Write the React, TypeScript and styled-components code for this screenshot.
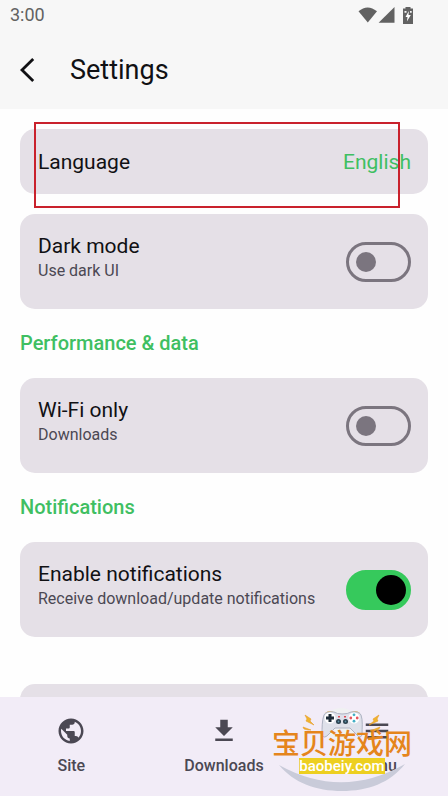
import React from "react";
import styled, { createGlobalStyle } from "styled-components";

const GlobalStyle = createGlobalStyle`
  *, *::before, *::after { box-sizing: border-box; }
  body {
    margin: 0;
    background: #fefefe;
    color: #111114;
    font-family: Roboto, "Noto Sans", sans-serif;
  }
  button, input { font: inherit; margin: 0; }
`;

const green = "#3fbf62";
const muted = "#4b4853";

const Screen = styled.div`
  display: flex;
  flex-direction: column;
  height: 100vh;
`;

const TopBar = styled.header`
  flex: none;
  background: #f7f7f7;
`;

const StatusBar = styled.div`
  display: flex;
  align-items: center;
  justify-content: space-between;
  height: 30px;
  padding: 0 35px 0 10px;
  color: #626262;
  font-size: 18px;
  line-height: 30px;
`;

const StatusIcons = styled.div`
  display: flex;
  align-items: center;
`;

const TitleRow = styled.div`
  display: flex;
  align-items: center;
  gap: 30px;
  height: 79px;
  padding: 0 12px;
`;

const BackButton = styled.button`
  display: flex;
  justify-content: center;
  width: 28px;
  padding: 0;
  border: 0;
  background: none;
  color: inherit;
  cursor: pointer;
`;

const Title = styled.h1`
  margin: 0;
  font-size: 27px;
  font-weight: 400;
  line-height: 36px;
`;

const Content = styled.main`
  flex: 1;
  min-height: 0;
  display: flex;
  flex-direction: column;
  gap: 20px;
  padding: 20px;
  overflow-y: auto;
  scrollbar-width: none;
`;

const Card = styled.div<{ $tall?: boolean; $spaced?: boolean }>`
  position: relative;
  flex: none;
  display: flex;
  align-items: center;
  justify-content: space-between;
  min-height: ${(p) => (p.$tall ? 95 : 65)}px;
  margin-top: ${(p) => (p.$spaced ? 27 : 0)}px;
  padding: 17px;
  padding-left: 18px;
  border-radius: 15px;
  background: #e5e0e7;
`;

const TextColumn = styled.label`
  display: flex;
  flex-direction: column;
  align-self: flex-start;
`;

const ItemTitle = styled.span`
  font-size: 21px;
  line-height: 30px;
`;

const ItemNote = styled.span`
  color: ${muted};
  font-size: 16px;
  line-height: 20px;
`;

const ValueButton = styled.button`
  padding: 0;
  border: 0;
  background: none;
  color: ${green};
  font-size: 21px;
  line-height: 30px;
  cursor: pointer;
`;

const Highlight = styled.div`
  position: absolute;
  inset: -7px 28px -14px 14px;
  border: 2px solid #c9212c;
  pointer-events: none;
`;

const SectionTitle = styled.h2`
  flex: none;
  margin: 0;
  color: ${green};
  font-size: 20px;
  font-weight: 500;
  line-height: 29px;
`;

const Switch = styled.input`
  appearance: none;
  flex: none;
  display: flex;
  align-items: center;
  width: 65px;
  height: 40px;
  padding: 0 7px;
  border: 3px solid #7b757f;
  border-radius: 20px;
  cursor: pointer;

  &::before {
    content: "";
    width: 20px;
    height: 20px;
    border-radius: 50%;
    background: #7b757f;
  }

  &:checked {
    justify-content: flex-end;
    padding: 0 2px;
    border-color: #36c95c;
    background: #36c95c;
  }

  &:checked::before {
    width: 30px;
    height: 30px;
    background: #000;
  }
`;

const BottomNav = styled.nav`
  position: relative;
  flex: none;
  display: grid;
  grid-template-columns: repeat(3, 1fr);
  gap: 10px;
  height: 99px;
  padding-top: 19px;
  background: #f2ecf7;
`;

const NavLink = styled.a`
  display: flex;
  flex-direction: column;
  align-items: center;
  gap: 10px;
  color: ${muted};
  font-size: 16px;
  font-weight: 500;
  line-height: 20px;
  text-decoration: none;
`;

const Watermark = styled.div`
  position: absolute;
  right: 36px;
  bottom: 4px;
  display: flex;
  flex-direction: column;
  align-items: center;
  width: 140px;
  height: 84px;
  padding-top: 19px;
  pointer-events: none;
`;

const WatermarkArt = styled.svg`
  position: absolute;
  inset: 0;
`;

const WatermarkName = styled.span`
  position: relative;
  color: #e5851c;
  font-family: "Noto Sans CJK SC", sans-serif;
  font-size: 28px;
  font-weight: 500;
  line-height: 31px;
  white-space: nowrap;
`;

const WatermarkSite = styled.span`
  position: relative;
  width: 86px;
  background: #edcf20;
  color: #fff;
  font-size: 15px;
  font-weight: 500;
  line-height: 16px;
  text-align: center;
`;

const WifiIcon = () => (
  <svg width="20" height="16" viewBox="0 0 20 16" fill="currentColor" aria-hidden="true">
    <path d="M0.5 4.2Q9.5-3.4 19 4.2L9.8 15.5Z" />
  </svg>
);

const SignalIcon = () => (
  <svg width="17" height="16" viewBox="0 0 17 16" fill="currentColor" aria-hidden="true">
    <path d="M16.5 0V15.8H0.6Z" />
  </svg>
);

const BatteryIcon = () => (
  <svg width="18" height="17" viewBox="0 0 18 17" aria-hidden="true">
    <path d="M10.5 0h5v1.5H18V17H8V1.5h2.5Z" fill="currentColor" />
    <path d="M13.8 4L10.5 10h2l-.6 4.5L15.8 8h-2.3Z" fill="#fff" />
    <path d="M9.5 4h2v1.8h-2ZM15 4h1.7v1.8H15Z" fill="#f7f7f7" />
  </svg>
);

const BackIcon = () => (
  <svg width="18" height="26" viewBox="0 0 18 26" fill="none" aria-hidden="true">
    <path d="M16.2 2L5 13L16.2 24" stroke="currentColor" strokeWidth="2.8" />
  </svg>
);

const GlobeIcon = () => (
  <svg width="30" height="30" viewBox="0 0 24 24" fill="currentColor" aria-hidden="true">
    <path d="M12 2C6.48 2 2 6.48 2 12s4.48 10 10 10 10-4.48 10-10S17.52 2 12 2zm-1 17.93c-3.95-.49-7-3.85-7-7.93 0-.62.08-1.21.21-1.79L9 15v1c0 1.1.9 2 2 2v1.93zm6.9-2.54c-.26-.81-1-1.39-1.9-1.39h-1v-3c0-.55-.45-1-1-1H8v-2h2c.55 0 1-.45 1-1V7h2c1.1 0 2-.9 2-2v-.41c2.93 1.19 5 4.06 5 7.41 0 2.08-.8 3.97-2.1 5.39z" />
  </svg>
);

const DownloadIcon = () => (
  <svg width="30" height="30" viewBox="0 0 24 24" fill="currentColor" aria-hidden="true">
    <path d="M19 9h-4V3H9v6H5l7 7 7-7zM5 18v2h14v-2H5z" />
  </svg>
);

const MenuIcon = () => (
  <svg width="30" height="30" viewBox="0 0 24 24" fill="currentColor" aria-hidden="true">
    <path d="M3 18h18v-2H3v2zm0-5h18v-2H3v2zm0-7v2h18V6H3z" />
  </svg>
);

const GamepadArt = () => (
  <WatermarkArt width="140" height="84" viewBox="-2 0 140 84" aria-hidden="true">
    <circle cx="67" cy="17" r="17" fill="#f0f1f2" />
    <path d="M5 57Q68 92 131 56C116 75 94 83 68 83S20 75 5 57Z" fill="#c9cbd9" />
    <path
      d="M31 7l6 4-1 2 4 4-8-4 1-2ZM29 19l8 3-3 0-4-1ZM105 7l-6 4 1 2-5 4 9-4-1-2ZM106 19l-10 4 4 0 5-2Z"
      fill="#f0b52c"
      stroke="#e79a2b"
      strokeWidth="0.6"
    />
    <path d="M51 5q5-4 10 0ZM76 5q5-4 10 0Z" fill="#edb850" />
    <path
      d="M50 7Q52 3 60 4Q63 6 68 6Q74 6 77 4Q85 3 87 7C89 12 88 20 88 27Q86 31 83 27L76 20H61L54 27Q50 31 48 27C48 20 48 12 50 7Z"
      fill="#dfe1ea"
      stroke="#aeb3c2"
      strokeWidth="1"
    />
    <circle cx="56" cy="10" r="5.5" fill="#fff" />
    <circle cx="80" cy="10" r="5.5" fill="#fff" />
    <path d="M54.5 6h3v2.500h2.500v3h-2.500V14h-3v-2.500H52v-3h2.500Z" fill="#1f2c38" />
    <g fill="#2b414f">
      <circle cx="64.500" cy="13.500" r="2.500" />
      <circle cx="71.500" cy="13.500" r="2.500" />
    </g>
    <g fill="#5d8fa4">
      <circle cx="64.500" cy="13.500" r="0.900" />
      <circle cx="71.500" cy="13.500" r="0.900" />
    </g>
    <path d="M64 8h2v1.500h-2ZM70 8h2v1.500h-2Z" fill="#df4d56" />
    <circle cx="80" cy="6.800" r="1.400" fill="#44afc6" />
    <circle cx="76.800" cy="10" r="1.400" fill="#e8545d" />
    <circle cx="83.200" cy="10" r="1.400" fill="#e8545d" />
    <circle cx="80" cy="13.200" r="1.400" fill="#44afc6" />
  </WatermarkArt>
);

interface ToggleCardProps {
  id: string;
  title: string;
  note: string;
  on?: boolean;
}

const ToggleCard = ({ id, title, note, on }: ToggleCardProps) => (
  <Card $tall>
    <TextColumn htmlFor={id}>
      <ItemTitle>{title}</ItemTitle>
      <ItemNote>{note}</ItemNote>
    </TextColumn>
    <Switch id={id} type="checkbox" role="switch" defaultChecked={on} />
  </Card>
);

export default function App() {
  return (
    <Screen>
      <GlobalStyle />
      <TopBar>
        <StatusBar>
          <span>3:00</span>
          <StatusIcons>
            <WifiIcon />
            <SignalIcon />
            <BatteryIcon />
          </StatusIcons>
        </StatusBar>
        <TitleRow>
          <BackButton type="button" aria-label="Back">
            <BackIcon />
          </BackButton>
          <Title>Settings</Title>
        </TitleRow>
      </TopBar>
      <Content>
        <Card>
          <ItemTitle id="language">Language</ItemTitle>
          <ValueButton type="button" aria-describedby="language">
            English
          </ValueButton>
          <Highlight />
        </Card>
        <ToggleCard id="dark" title="Dark mode" note="Use dark UI" />
        <SectionTitle>Performance &amp; data</SectionTitle>
        <ToggleCard id="wifi" title="Wi-Fi only" note="Downloads" />
        <SectionTitle>Notifications</SectionTitle>
        <ToggleCard
          id="notify"
          title="Enable notifications"
          note="Receive download/update notifications"
          on
        />
        <Card $tall $spaced />
      </Content>
      <BottomNav>
        <NavLink href="#site">
          <GlobeIcon />
          Site
        </NavLink>
        <NavLink href="#downloads">
          <DownloadIcon />
          Downloads
        </NavLink>
        <NavLink href="#menu">
          <MenuIcon />
          Menu
        </NavLink>
        <Watermark>
          <GamepadArt />
          <WatermarkName lang="zh-CN">宝贝游戏网</WatermarkName>
          <WatermarkSite>baobeiy.com</WatermarkSite>
        </Watermark>
      </BottomNav>
    </Screen>
  );
}
